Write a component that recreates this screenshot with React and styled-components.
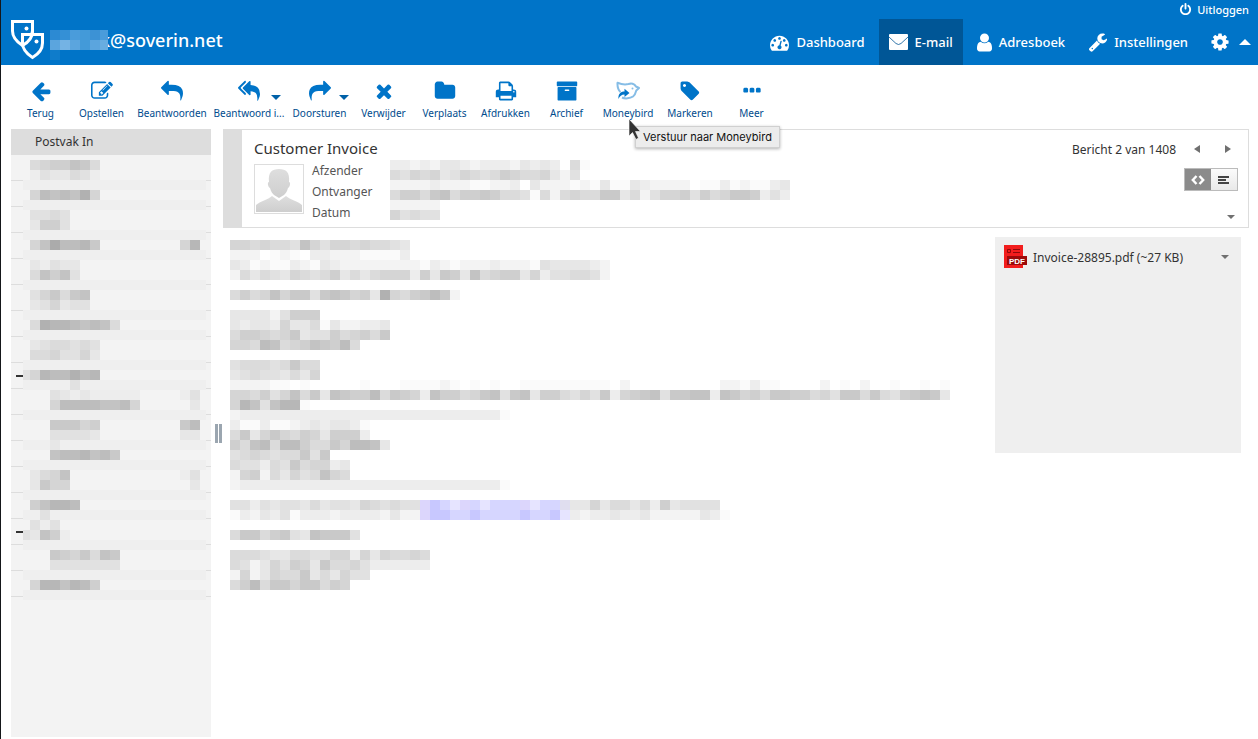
import React from 'react'
import styled, { createGlobalStyle } from 'styled-components';

/* icon outlines, all on a 1792 grid */
const dot = 'q0-53-37.5-90.5t-90.5-37.5-90.5 37.5-37.5 90.5 37.5 90.5 90.5 37.5 90.5-37.5 37.5-90.5z';
const block = 'v192q0 40-28 68t-68 28h-192q-40 0-68-28t-28-68v-192q0-40 28-68t68-28h192q40 0 68 28t28 68z';
const icons = {
    back: 'M1664 896v128q0 53-32.5 90.5t-84.5 37.5h-704l293 294q38 36 38 90t-38 90l-75 76q-37 37-90 37-52 0-91-37l-651-652q-37-37-37-90 0-52 37-91l651-650q38-38 91-38 52 0 90 38l75 74q38 38 38 91t-38 91l-293 293h704q52 0 84.5 37.5t32.5 90.5z',
    compose: 'M888 1184l116-116-152-152-116 116v56h96v96h56zm440-720q-16-16-33 1l-350 350q-17 17-1 33t33-1l350-350q17-17 1-33zm80 594v190q0 119-84.5 203.5t-203.5 84.5h-832q-119 0-203.5-84.5t-84.5-203.5v-832q0-119 84.5-203.5t203.5-84.5h832q63 0 117 25 15 7 18 23 3 17-9 29l-49 49q-14 14-32 8-23-6-45-6h-832q-66 0-113 47t-47 113v832q0 66 47 113t113 47h832q66 0 113-47t47-113v-126q0-13 9-22l64-64q15-15 35-7t20 29zm-96-738l288 288-672 672h-288v-288zm444 132l-92 92-288-288 92-92q28-28 68-28t68 28l152 152q28 28 28 68t-28 68z',
    reply: 'M1792 1120q0 166-127 451-3 7-10.5 24t-13.5 30-13 22q-12 17-28 17-15 0-23.5-10t-8.5-25q0-9 2.5-26.5t2.5-23.5q5-68 5-123 0-101-17.5-181t-48.5-138.5-80-101-105.5-69.5-133-42.5-154-21.5-175.5-6h-224v256q0 26-19 45t-45 19-45-19l-512-512q-19-19-19-45t19-45l512-512q19-19 45-19t45 19 19 45v256h224q713 0 875 403 53 134 53 333z',
    replyAll: 'M640 1082v70q0 42-39 59-13 5-25 5-27 0-45-19l-512-512q-19-19-19-45t19-45l512-512q29-31 70-14 39 17 39 59v69l-397 398q-19 19-19 45t19 45zm1152 58q0 58-17 133.5t-38.5 138-48 125-40.5 90.5l-20 40q-8 17-28 17-6 0-9-1-25-8-23-34 43-400-106-565-64-71-170.5-110.5t-267.5-52.5v251q0 42-39 59-13 5-25 5-27 0-45-19l-512-512q-19-19-19-45t19-45l512-512q29-31 70-14 39 17 39 59v262q411 28 599 221 169 173 169 509z',
    remove: 'M1490 1322q0 40-28 68l-136 136q-28 28-68 28t-68-28l-294-294-294 294q-28 28-68 28t-68-28l-136-136q-28-28-28-68t28-68l294-294-294-294q-28-28-28-68t28-68l136-136q28-28 68-28t68 28l294 294 294-294q28-28 68-28t68 28l136 136q28 28 28 68t-28 68l-294 294 294 294q28 28 28 68z',
    folder: 'M1728 608v704q0 92-66 158t-158 66h-1216q-92 0-158-66t-66-158v-960q0-92 66-158t158-66h320q92 0 158 66t66 158v32h672q92 0 158 66t66 158z',
    print: 'M448 1536h896v-256h-896v256zm0-640h896v-384h-160q-40 0-68-28t-28-68v-160h-640v640zm1152 64q0-26-19-45t-45-19-45 19-19 45 19 45 45 19 45-19 19-45zm128 0v416q0 13-9.5 22.5t-22.5 9.5h-224v160q0 40-28 68t-68 28h-960q-40 0-68-28t-28-68v-160h-224q-13 0-22.5-9.5t-9.5-22.5v-416q0-79 56.5-135.5t135.5-56.5h64v-544q0-40 28-68t68-28h672q40 0 88 20t76 48l152 152q28 28 48 76t20 88v256h64q79 0 135.5 56.5t56.5 135.5z',
    archive: 'M1088 832q0-26-19-45t-45-19h-256q-26 0-45 19t-19 45 19 45 45 19h256q26 0 45-19t19-45zm576-192v960q0 26-19 45t-45 19h-1408q-26 0-45-19t-19-45v-960q0-26 19-45t45-19h1408q26 0 45 19t19 45zm64-448v256q0 26-19 45t-45 19h-1536q-26 0-45-19t-19-45v-256q0-26 19-45t45-19h1536q26 0 45 19t19 45z',
    tag: 'M576 448q0-53-37.5-90.5t-90.5-37.5-90.5 37.5-37.5 90.5 37.5 90.5 90.5 37.5 90.5-37.5 37.5-90.5zm1067 576q0 53-37 90l-491 492q-39 37-91 37-53 0-90-37l-715-716q-38-37-64.5-101t-26.5-117v-416q0-52 38-90t90-38h416q53 0 117 26.5t102 64.5l715 714q37 39 37 91z',
    more: `M576 736${block}M1088 736${block}M1600 736${block}`,
    dashboard: `M384 1152${dot}M576 704${dot}M1004 1185l101-382q6-26-7.5-48.5t-38.5-29.5-48 6.5-30 39.5l-101 382q-60 5-107 43.5t-63 98.5q-20 77 20 146t117 89 146-20 89-117q16-60-6-117t-72-91zM1664 1152${dot}M1024 512${dot}M1472 704${dot}M1792 1152q0 261-141 483-19 29-54 29h-1402q-35 0-54-29-141-221-141-483 0-182 71-348t191-286 286-191 348-71 348 71 286 191 191 286 71 348z`,
    user: 'M1536 1399q0 109-62.5 187t-150.5 78h-854q-88 0-150.5-78t-62.5-187q0-85 8.5-160.5t31.5-152 58.5-131 94-89 134.5-34.5q131 128 313 128t313-128q76 0 134.5 34.5t94 89 58.5 131 31.5 152 8.5 160.5zm-256-887q0 159-112.5 271.5t-271.5 112.5-271.5-112.5-112.5-271.5 112.5-271.5 271.5-112.5 271.5 112.5 112.5 271.5z',
    wrench: 'M448 1472q0-26-19-45t-45-19-45 19-19 45 19 45 45 19 45-19 19-45zm644-420l-682 682q-37 37-90 37-52 0-91-37l-106-108q-38-36-38-90 0-53 38-91l681-681q39 98 114.5 173.5t173.5 114.5zm634-435q0 39-23 106-47 134-164.5 217.5t-258.5 83.5q-185 0-316.5-131.5t-131.5-316.5 131.5-316.5 316.5-131.5q58 0 121.5 16.5t107.5 46.5q16 11 16 28t-16 28l-293 169v224l193 107q5-3 79-48.5t135.5-81 70.5-35.5q15 0 23.5 10t8.5 25z',
    cog: 'M1152 896q0-106-75-181t-181-75-181 75-75 181 75 181 181 75 181-75 75-181zm512-109v222q0 12-8 23t-20 13l-185 28q-19 54-39 91 35 50 107 138 10 12 10 25t-9 23q-27 37-99 108t-94 71q-12 0-26-9l-138-108q-44 23-91 38-16 136-29 186-7 28-36 28h-222q-14 0-24.5-8.5t-11.5-21.5l-28-184q-49-16-90-37l-141 107q-10 9-25 9-14 0-25-11-126-114-165-168-7-10-7-23 0-12 8-23 15-21 51-66.5t54-70.5q-27-50-41-99l-183-27q-13-2-21-12.5t-8-23.5v-222q0-12 8-23t19-13l186-28q14-46 39-92-40-57-107-138-10-12-10-24 0-10 9-23 26-36 98.5-107.5t94.5-71.5q13 0 26 10l138 107q44-23 91-38 16-136 29-186 7-28 36-28h222q14 0 24.5 8.5t11.5 21.5l28 184q49 16 90 37l142-107q9-9 24-9 13 0 25 10 129 119 165 170 7 8 7 22 0 12-8 23-15 21-51 66.5t-54 70.5q26 50 41 98l183 28q13 2 21 12.5t8 23.5z',
    power: 'M1664 896q0 156-61 298t-164 245-245 164-298 61-298-61-245-164-164-245-61-298q0-182 80.5-343t226.5-270q43-32 95.5-25t83.5 50q32 42 24.5 94.5t-49.5 84.5q-98 74-151.5 181t-53.5 228q0 104 40.5 198.5t109.5 163.5 163.5 109.5 198.5 40.5 198.5-40.5 163.5-109.5 109.5-163.5 40.5-198.5q0-121-53.5-228t-151.5-181q-42-32-49.5-84.5t24.5-94.5q31-43 84-50t95 25q146 109 226.5 270t80.5 343zm-640-768v640q0 52-38 90t-90 38-90-38-38-90v-640q0-52 38-90t90-38 90 38 38 90z',
};

const tools = [
    { label: 'Terug', icon: 'back' },
    { label: 'Opstellen', icon: 'compose' },
    { label: 'Beantwoorden', icon: 'reply', width: 80 },
    { label: 'Beantwoord i...', icon: 'replyAll', width: 74, menu: true },
    { label: 'Doorsturen', icon: 'reply', flip: true, width: 67, menu: true },
    { label: 'Verwijder', icon: 'remove' },
    { label: 'Verplaats', icon: 'folder' },
    { label: 'Afdrukken', icon: 'print' },
    { label: 'Archief', icon: 'archive' },
    { label: 'Moneybird', width: 62, tip: 'Verstuur naar Moneybird' },
    { label: 'Markeren', width: 62, icon: 'tag' },
    { label: 'Meer', icon: 'more' },
];

/* censored text: one character per 10px cell, hex digit = how dark */
const greys = {
    p: '#c8c8ff', q: '#d6d6ff', r: '#e6e4ff', s: '#dcd6fc', t: '#e0deef',
};
'23456789abcdef'.split('').forEach((c, i) => {
    const v = 255 - (i + 2) * 6;
    greys[c] = `rgb(${v}, ${v}, ${v})`;
});
greys[1] = '#fafafa';

const blues = {
    a: '#2c8ad3', b: '#3490d6', c: '#4a9cdb', d: '#439ad9', e: '#3c92d5',
    f: '#5ba5de', g: '#74b3e4', h: '#68ade1', i: '#0f7ccb',
};

const userCells = ['abcdec', 'fgfdfh', 'i'];

const metaCells = [
    '33232443233324343.61',
    '6576745765687667425',
    '2222322211223.42221214114322220113121134',
    '68869a6889866516267669946257785867998353',
    '22222',
    '75655',
];

const bodyCells = [
    '7767665a7577676654',
    '222.121.3322211113',
    '43121132143222222221321222322215444432',
    '264654765684646777384984a6788473556652',
    '',
    '6867a79959a9784d7689b92',
    '',
    '444425888',
    '4344374461422334',
    '6887679455867869',
    '776ba678a98b6',
    '',
    '566656966',
    '456554647',
    '222211.1.....1...111121.1.1..111111111.2.........221311....2.1.2..1..1.1',
    '776857a694a988b69873a88679a59a488657593789a599aa3a9786998867599696589a94',
    '7ca5acc1',
    '2333333333333333333333333331',
    '31131123434431',
    '69479768748883',
    '86ab6bb86697bba4',
    '5676566959',
    '655365967734',
    '278264756a76',
    '2333333333333333333333333331',
    '',
    '5535455464554765655spqrsqrqqqsrqqt447466463845555',
    '1324351333233332422sppqqpqqqqpqqpr3233433422222431',
    '',
    '69968954a9995',
    '',
    '66654466557737476676',
    '65247587496675333333',
    '27247669464755',
    '68b699799687',
];

/* a leading = marks a slightly darker strip over the full width */
const folderCells = [
    '.6788a96',
    '.3544653',
    '=',
    '.7babad7',
    '=',
    '.5565',
    '.4885',
    '=',
    '.7aebbc9........7c',
    '=',
    '.43544',
    '.6a8a5',
    '=',
    '.57969a',
    '.457455',
    '=',
    '.6dccbaba6',
    '=',
    '.4566565',
    '.6675574',
    '=',
    '57cbbdbc',
    '=.....5',
    '...543433333....35',
    '...7bbbbaab7.....4',
    '=',
    '...99978........9b',
    '...55554........44',
    '=...4',
    '...abbcab9',
    '=',
    '.467a...........35',
    '.4977............4',
    '=',
    '.8accb',
    '=..5',
    '.535',
    '54a83',
    '=',
    '...98796a9',
    '...5555555',
    '=',
    '.7ccacb8',
    '=',
];

const folderRows = Array.from({ length: 17 }, (_, i) => ({ id: i, open: i === 8 || i === 14 }));

function Icon({ name, size, width, flip }) {
    /* a width below the size trims the empty sides of the grid */
    const w = 1792 * (width || size) / size;
    return (
        <svg width={width || size} height={size} viewBox={`${(1792 - w) / 2} 0 ${w} 1792`} fill="currentColor" aria-hidden="true">
            <path d={icons[name]} transform={flip ? 'translate(1792 0) scale(-1 1)' : undefined}/>
        </svg>
    )
}

function Cells({ rows, palette, cut = 0, width, strip, base }) {
    const cols = Math.max(...rows.map(r => r.length));
    const w = width || cols * 10;
    const h = rows.length * 10;
    return (
        <CellsStyled width={w} height={h} viewBox={`${cut} 0 ${w} ${h}`} shapeRendering="crispEdges" aria-hidden="true">
            {base && <rect x={cut} y="0" width={w} height={h} fill={base}/>}
            {rows.map((row, y) => {
                const dark = row[0] === '=';
                const cells = dark ? row.slice(1) : row;
                return (
                    <g key={y}>
                        {dark && <rect x={cut} y={y * 10} width={w} height="10" fill={strip}/>}
                        {cells.split('').map((c, x) => palette[c] && (
                            <rect key={x} x={x * 10} y={y * 10} width="10" height="10" fill={palette[c]}/>
                        ))}
                    </g>
                )
            })}
        </CellsStyled>
    )
}

function Logo() {
    return (
        <svg width="34" height="42" viewBox="0 0 34 42" fill="none" stroke="#fff" strokeWidth="3" aria-hidden="true">
            <path d="M1.500 3.500H21.500V13C21.500 20 17 24.500 11.500 27.500C6 24 1.500 20 1.500 13Z"/>
            <path d="M12 16.500H31.500V25C31.500 32 27.500 36 21.500 39.500C16 36 12 32 12 25Z" fill="#0074c8" stroke="none"/>
            <path d="M21.500 11V13C21.500 20 17 24.500 11.500 27.500"/>
            <path d="M11.500 16.500H31.500V25C31.500 32 27.500 36 21.500 39.500C16 36 11.500 32 11.500 25Z"/>
            <circle cx="15.500" cy="10.500" r="2" fill="#fff" stroke="none"/>
            <circle cx="25.500" cy="23.500" r="2" fill="#fff" stroke="none"/>
        </svg>
    )
}

function Bird() {
    return (
        <svg width="24" height="22" viewBox="0 0 24 22" fill="none" aria-hidden="true">
            <path d="M6 17.500C9 19 14 18.500 17 16.500C19 15 19.800 12.500 20.300 10.500L23 8L20 6.500C18.500 3.500 15 3 12.500 4C9 4.800 4.500 4 1.500 2.800C1.300 6.500 2.300 10 4.500 12" stroke="#86bde6" strokeWidth="2" strokeLinejoin="round"/>
            <circle cx="16.500" cy="8.500" r="1" fill="#86bde6"/>
            <path d="M2.500 19C2 14 4.500 11.500 8.500 11.500V8.800L13.500 13L8.500 17V14.500C5.500 14.500 3.800 16 2.500 19Z" fill="#0074c8"/>
        </svg>
    )
}

function Header() {
    return (
        <HeaderStyled>
            <div className="account">
                <Logo/>
                <div className="name">
                    <Cells rows={userCells} palette={blues} width={58}/>
                    <span>k@soverin.net</span>
                </div>
            </div>
            <div className="menus">
                <LogoutLink href="#uitloggen"><Icon name="power" size={13}/>Uitloggen</LogoutLink>
                <nav>
                    <NavLink href="#dashboard"><Icon name="dashboard" size={19}/>Dashboard</NavLink>
                    <NavLink href="#email" $active>
                        <svg width="19" height="16" viewBox="0 0 19 16" aria-hidden="true">
                            <rect width="19" height="16" rx="1" fill="#fff"/>
                            <path d="M0 3L7 9.500Q9.500 11.500 12 9.500L19 3" fill="none" stroke="#005696" strokeWidth="0.800"/>
                        </svg>
                        E-mail
                    </NavLink>
                    <NavLink href="#adresboek"><Icon name="user" size={21} width={15}/>Adresboek</NavLink>
                    <NavLink href="#instellingen"><Icon name="wrench" size={20} width={18}/>Instellingen</NavLink>
                    <GearButton type="button" aria-label="Opties">
                        <Icon name="cog" size={20}/>
                        <Triangle width="12" height="6" viewBox="0 0 12 6"><path d="M0 6L6 0L12 6Z"/></Triangle>
                    </GearButton>
                </nav>
            </div>
        </HeaderStyled>
    )
}

function Toolbar() {
    return (
        <ToolbarStyled>
            {tools.map(tool => (
                <Tool key={tool.label} type="button" $width={tool.width} aria-haspopup={tool.menu}>
                    <span className="icon">
                        {tool.icon ? <Icon name={tool.icon} size={22} flip={tool.flip}/> : <Bird/>}
                        {tool.menu && <Triangle width="10" height="5" viewBox="0 0 10 5"><path d="M0 0H10L5 5Z"/></Triangle>}
                    </span>
                    {tool.label}
                    {tool.tip && (
                        <Pointer width="14" height="22" viewBox="0 0 14 22">
                            <path d="M1 1V18L4.500 14.500L8 21.500L10.500 20L7.500 13.500H12.500Z" fill="#333" stroke="#fff" strokeWidth="0.600"/>
                        </Pointer>
                    )}
                    {tool.tip && <Tooltip role="tooltip">{tool.tip}</Tooltip>}
                </Tool>
            ))}
        </ToolbarStyled>
    )
}

function Folders() {
    return (
        <FoldersStyled>
            <a href="#postvak-in">Postvak In</a>
            {folderRows.map(row => (
                <FolderRow key={row.id}>
                    {row.open && <button type="button" aria-label="Inklappen"/>}
                </FolderRow>
            ))}
            <div className="cells">
                <Cells rows={folderCells} palette={greys} cut={3} width={183} strip="#efefef" base="#f3f3f3"/>
            </div>
        </FoldersStyled>
    )
}

function MessageHeader() {
    return (
        <MessageHeaderStyled>
            <div className="summary">
                <h1>Customer Invoice</h1>
                <div className="details">
                    <Avatar>
                        <svg width="46" height="46" viewBox="0 0 46 46" aria-hidden="true">
                            <defs>
                                <linearGradient id="person" x1="0" y1="0" x2="0" y2="1">
                                    <stop offset="0" stopColor="#dedede"/>
                                    <stop offset="1" stopColor="#cecece"/>
                                </linearGradient>
                            </defs>
                            <path fill="url(#person)" d="M23 3C30 3 34 6 33 16C35 16 34 21 32 22C31 26 29 28 28 29L23 32L18 29C17 28 15 26 14 22C12 21 11 16 13 16C12 6 16 3 23 3Z"/>
                            <path fill="url(#person)" d="M16 30L23 35L30 30C34 34 42 35 46 39V46H0V39C4 35 12 34 16 30Z"/>
                        </svg>
                    </Avatar>
                    <dl>
                        <dt>Afzender</dt>
                        <dt>Ontvanger</dt>
                        <dt>Datum</dt>
                    </dl>
                    <Cells rows={metaCells} palette={greys}/>
                </div>
            </div>
            <div className="controls">
                <div className="pager">
                    <span>Bericht 2 van 1408</span>
                    <PlainButton type="button" aria-label="Vorige">
                        <Triangle width="6" height="8" viewBox="0 0 6 8"><path d="M6 0V8L0 4Z"/></Triangle>
                    </PlainButton>
                    <PlainButton type="button" aria-label="Volgende">
                        <Triangle width="6" height="8" viewBox="0 0 6 8"><path d="M0 0V8L6 4Z"/></Triangle>
                    </PlainButton>
                </div>
                <ViewSwitch>
                    <ViewButton type="button" aria-label="HTML" $active>
                        <svg width="14" height="10" viewBox="0 0 14 10" fill="none" stroke="currentColor" strokeWidth="2.400">
                            <path d="M5.500 1L1.800 5L5.500 9M8.500 1L12.200 5L8.500 9"/>
                        </svg>
                    </ViewButton>
                    <ViewButton type="button" aria-label="Platte tekst">
                        <svg width="12" height="8" viewBox="0 0 12 8" fill="currentColor">
                            <path d="M0 0H11V2H0ZM0 3H8V5H0ZM0 6H11V8H0Z"/>
                        </svg>
                    </ViewButton>
                </ViewSwitch>
                <PlainButton type="button" aria-label="Meer details" $narrow>
                    <Triangle width="8" height="4" viewBox="0 0 8 4"><path d="M0 0H8L4 4Z"/></Triangle>
                </PlainButton>
            </div>
        </MessageHeaderStyled>
    )
}

function Attachments() {
    return (
        <AttachmentsStyled>
            <div className="file">
                <svg width="24" height="24" viewBox="0 0 24 24" aria-hidden="true">
                    <path d="M0 0H19V23H0Z" fill="#f21d1d"/>
                    <path d="M3.500 4.500H6.500V7.500H3.500Z" fill="none" stroke="#8d0a0a"/>
                    <path d="M9 4.500H16M9 7.500H16" stroke="#8d0a0a"/>
                    <path d="M3 11H23V20H3Z" fill="#9d0a0a"/>
                    <text x="5" y="19" fill="#fff" fontFamily="Liberation Sans, sans-serif" fontSize="8" fontWeight="700">PDF</text>
                </svg>
                <a href="#bijlage">Invoice-28895.pdf (~27 KB)</a>
                <PlainButton type="button" aria-label="Opties voor bijlage">
                    <Triangle width="8" height="4" viewBox="0 0 8 4"><path d="M0 0H8L4 4Z"/></Triangle>
                </PlainButton>
            </div>
        </AttachmentsStyled>
    )
}

function App() {
    return (
        <AppStyled>
            <GlobalStyle/>
            <Header/>
            <Toolbar/>
            <main>
                <Folders/>
                <Splitter/>
                <section>
                    <MessageHeader/>
                    <div className="message">
                        <article><Cells rows={bodyCells} palette={greys}/></article>
                        <Attachments/>
                    </div>
                </section>
            </main>
        </AppStyled>
    )
}

const GlobalStyle = createGlobalStyle`
    *{
        box-sizing: border-box;
    }
    body{
        margin: 0;
        background: #fff;
        color: #333;
        font-family: "Noto Sans", sans-serif;
        font-size: 12px;
    }
    button{
        border: 0;
        padding: 0;
        background: none;
        color: inherit;
        font: inherit;
    }
    a{
        color: inherit;
        text-decoration: none;
    }
`;

const AppStyled = styled.div`
    display: flex;
    flex-direction: column;
    min-height: 100vh;
    border-left: 1px solid #15171a;
    main{
        flex: 1;
        display: flex;
        padding: 0 9px 2px 10px;
    }
    section{
        flex: 1;
        min-width: 0;
    }
    .message{
        display: flex;
        align-items: flex-start;
        justify-content: space-between;
        padding: 9px 8px 0 7px;
    }
    article{
        padding-top: 3px;
        min-width: 0;
    }
`;

const CellsStyled = styled.svg`
    display: block;
    flex: none;
`;

const Triangle = styled.svg`
    display: block;
    fill: currentColor;
`;

const HeaderStyled = styled.header`
    display: flex;
    justify-content: space-between;
    height: 65px;
    background: #0074c8;
    color: #fff;
    .account{
        display: flex;
        align-items: flex-start;
        gap: 5px;
        padding: 18px 0 0 10px;
    }
    .name{
        display: flex;
        padding-top: 12px;
        font-size: 18px;
        font-weight: 500;
        line-height: 20px;
    }
    .name svg{
        position: relative;
        z-index: 1;
    }
    .name span{
        margin-left: -8px;
    }
    .menus{
        display: flex;
        flex-direction: column;
        align-items: flex-end;
    }
    nav{
        display: flex;
    }
`;

const LogoutLink = styled.a`
    display: flex;
    align-items: center;
    gap: 5px;
    height: 19px;
    padding-right: 9px;
    font-size: 11px;
    font-weight: 500;
`;

const NavLink = styled.a`
    display: flex;
    align-items: center;
    gap: 7px;
    height: 46px;
    padding: 0 10px;
    margin-left: 4px;
    background: ${props => props.$active ? '#005696' : 'none'};
    font-size: 13px;
    font-weight: 500;
`;

const GearButton = styled.button`
    display: flex;
    align-items: center;
    gap: 9px;
    padding: 0 7px 0 12px;
`;

const ToolbarStyled = styled.div`
    display: flex;
    height: 64px;
    padding-left: 9px;
`;

const Tool = styled.button`
    position: relative;
    width: ${props => props.$width || 61}px;
    padding-top: 15px;
    color: #004b8d;
    font-size: 10px;
    line-height: 14px;
    white-space: nowrap;
    display: flex;
    flex-direction: column;
    align-items: center;
    gap: 4px;
    .icon{
        display: grid;
        grid-template-columns: 1fr auto 1fr;
        align-self: stretch;
        height: 22px;
        color: #0074c8;
    }
    .icon > :first-child{
        grid-column: 2;
    }
    .icon ${Triangle}{
        align-self: end;
        justify-self: center;
        margin: 0 0 2px 5px;
        color: #0061a8;
    }
`;

const Pointer = styled.svg`
    position: absolute;
    top: 53px;
    left: 31px;
    z-index: 2;
`;

const Tooltip = styled.span`
    position: absolute;
    top: 61px;
    left: 38px;
    z-index: 1;
    padding: 3px 7px;
    border: 1px solid #d0d0d0;
    background: #ececec;
    box-shadow: 0 1px 3px rgba(0, 0, 0, .3);
    color: #111;
    font-family: Inter, sans-serif;
    font-size: 11px;
    line-height: 14px;
`;

const FoldersStyled = styled.nav`
    position: relative;
    width: 200px;
    flex: none;
    background: #f3f3f3;
    > a{
        display: block;
        padding-left: 24px;
        background: #ddd;
        line-height: 26px;
    }
    .cells{
        position: absolute;
        top: 31px;
        left: 12px;
    }
`;

const FolderRow = styled.div`
    display: flex;
    align-items: center;
    height: 26px;
    padding-left: 5px;
    border-bottom: 1px solid #ddd;
    button{
        width: 8px;
        height: 2px;
        background: #333;
    }
`;

const Splitter = styled.div`
    align-self: center;
    width: 7px;
    height: 19px;
    margin: 0 1px 0 4px;
    border: solid #9ba6b0;
    border-width: 0 3px;
`;

const MessageHeaderStyled = styled.div`
    display: flex;
    justify-content: space-between;
    height: 99px;
    border: 1px solid #ddd;
    border-left-width: 19px;
    h1{
        margin: 0;
        padding-top: 8px;
        font-size: 15px;
        font-weight: 400;
        line-height: 20px;
    }
    .summary{
        padding-left: 12px;
    }
    .details{
        display: flex;
        align-items: flex-start;
        padding-top: 2px;
    }
    dl{
        width: 78px;
        margin: 0;
        color: #555;
        line-height: 21px;
    }
    .controls{
        display: flex;
        flex-direction: column;
        align-items: flex-end;
        padding: 9px 10px 0 0;
    }
    .pager{
        display: flex;
        align-items: center;
        gap: 11px;
        height: 20px;
    }
`;

const Avatar = styled.div`
    margin: 4px 8px 0 0;
    padding: 1px;
    border: 1px solid #ddd;
    width: 50px;
    height: 50px;
    svg{
        display: block;
    }
`;

const PlainButton = styled.button`
    display: flex;
    align-items: center;
    justify-content: center;
    width: ${props => props.$narrow ? 14 : 20}px;
    height: 20px;
    color: #707070;
`;

const ViewSwitch = styled.div`
    display: flex;
    margin: 9px 0 16px;
    border: 1px solid #bbb;
`;

const ViewButton = styled.button`
    display: flex;
    align-items: center;
    justify-content: center;
    width: 26px;
    height: 21px;
    background: ${props => props.$active ? '#8b8b8b' : 'linear-gradient(#fbfbfb, #e9e9e9)'};
    color: ${props => props.$active ? '#fff' : '#444'};
`;

const AttachmentsStyled = styled.aside`
    width: 246px;
    min-height: 216px;
    flex: none;
    background: #efefef;
    .file{
        display: flex;
        align-items: center;
        gap: 5px;
        padding: 8px 6px 0 9px;
    }
    a{
        flex: 1;
    }
`;

export default App;
